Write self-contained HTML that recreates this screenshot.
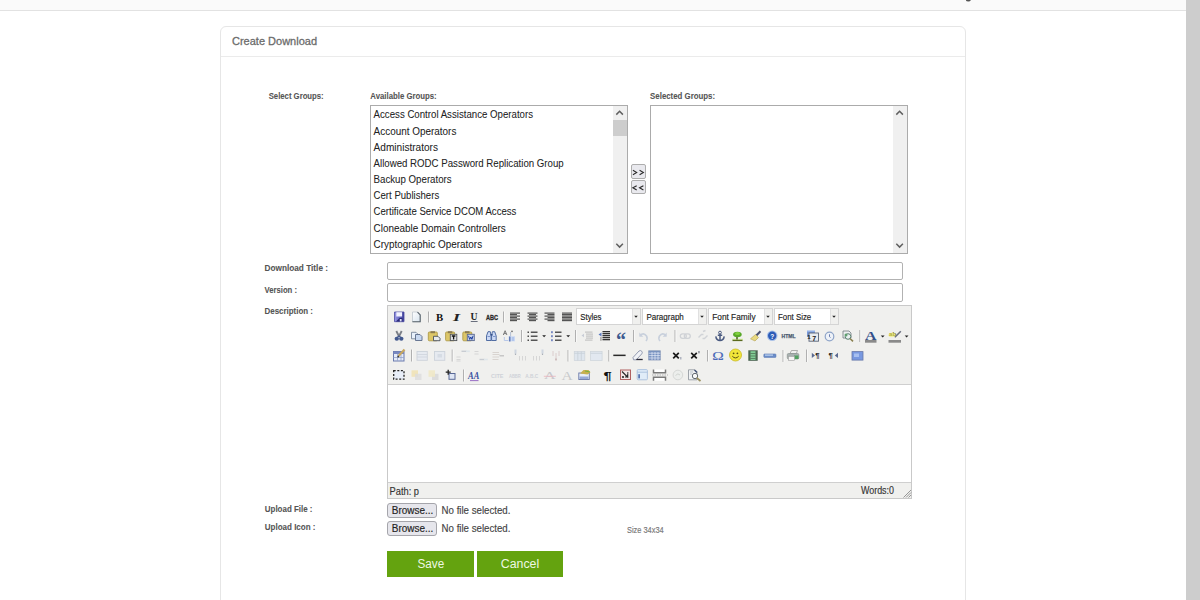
<!DOCTYPE html>
<html><head><meta charset="utf-8"><title>Create Download</title>
<style>
html,body{margin:0;padding:0;background:#fff;width:1200px;height:600px;overflow:hidden;font-family:"Liberation Sans",sans-serif;}
.abs{position:absolute;box-sizing:border-box;}
#topbar{left:0;top:0;width:1186px;height:11px;background:#fafafa;border-bottom:1px solid #e2e2e2;}
#scroll{left:1186px;top:0;width:14px;height:600px;background:#cdcdcd;}
#panel{left:220px;top:26px;width:746px;height:640px;border:1px solid #e6e6e6;border-radius:6px;background:#fff;}
#phead{left:221px;top:56px;width:744px;height:1px;background:#ebebeb;}
.list{border:1px solid #ababab;background:#fff;}
.sbtrack{background:#f0f0f0;}
.thumb{background:#cdcdcd;}
.inp{border:1px solid #b2b2b2;border-radius:2px;background:#fff;}
.mv{border:1px solid #adadad;border-radius:2px;background:#e9e9ee;}
#editor{left:387px;top:305px;width:525px;height:194px;border:1px solid #c9c9c9;background:#f0f0ee;}
#edarea{left:388px;top:384px;width:523px;height:99px;background:#fff;border-top:1px solid #cfcfcf;border-bottom:1px solid #cfcfcf;}
.sel{background:#fff;border:1px solid #d4d4d4;}
.selarr{background:#f0f0ee;border-left:1px solid #e0e0e0;}
.browse{border:1px solid #a5a5ab;border-radius:3px;background:#e6e6ec;}
.green{background:#64a30f;}
svg{position:absolute;left:0;top:0;}
</style></head>
<body>
<div class="abs" id="topbar"></div>
<div class="abs" id="scroll"></div>
<div class="abs" id="panel"></div>
<div class="abs" id="phead"></div>
<!-- available list -->
<div class="abs list" style="left:370px;top:105px;width:258px;height:149px;"></div>
<div class="abs sbtrack" style="left:613px;top:106px;width:14px;height:147px;"></div>
<div class="abs thumb" style="left:613px;top:120px;width:14px;height:16px;"></div>
<!-- selected list -->
<div class="abs list" style="left:650px;top:105px;width:258px;height:149px;"></div>
<div class="abs sbtrack" style="left:893px;top:106px;width:14px;height:147px;"></div>
<!-- move buttons -->
<div class="abs mv" style="left:631px;top:164px;width:15px;height:15px;"></div>
<div class="abs mv" style="left:631px;top:180px;width:15px;height:14px;"></div>
<!-- inputs -->
<div class="abs inp" style="left:387px;top:262px;width:516px;height:18px;"></div>
<div class="abs inp" style="left:387px;top:283px;width:516px;height:19px;"></div>
<!-- editor -->
<div class="abs" id="editor"></div>
<div class="abs" id="edarea"></div>
<div class="abs sel" style="left:576px;top:308px;width:65px;height:17px;"></div>
<div class="abs selarr" style="left:632px;top:309px;width:8px;height:15px;"></div>
<div class="abs sel" style="left:642px;top:308px;width:65px;height:17px;"></div>
<div class="abs selarr" style="left:698px;top:309px;width:8px;height:15px;"></div>
<div class="abs sel" style="left:708px;top:308px;width:65px;height:17px;"></div>
<div class="abs selarr" style="left:764px;top:309px;width:8px;height:15px;"></div>
<div class="abs sel" style="left:774px;top:308px;width:65px;height:17px;"></div>
<div class="abs selarr" style="left:830px;top:309px;width:8px;height:15px;"></div>
<!-- file inputs -->
<div class="abs browse" style="left:387px;top:503px;width:50px;height:15px;"></div>
<div class="abs browse" style="left:387px;top:521px;width:50px;height:15px;"></div>
<!-- buttons -->
<div class="abs green" style="left:387px;top:551px;width:87px;height:26px;"></div>
<div class="abs green" style="left:477px;top:551px;width:86px;height:26px;"></div>
<svg width="1200" height="600" viewBox="0 0 1200 600" font-family="Liberation Sans, sans-serif">
<defs><linearGradient id="gsave" x1="0" y1="0" x2="1" y2="0"><stop offset="0" stop-color="#9a9ae8"/><stop offset="1" stop-color="#3c3c98"/></linearGradient><linearGradient id="gdoc" x1="0" y1="0" x2="1" y2="1"><stop offset="0" stop-color="#ffffff"/><stop offset="1" stop-color="#d8e4ee"/></linearGradient></defs>
<path d="M394.5 312h9.5v9.7h-9.5z" fill="url(#gsave)" stroke="#4a4aa0" stroke-width="0.8"/>
<rect x="396.3" y="312.2" width="5.8" height="4.3" fill="#f2f2ff" />
<path d="M396 321.6l3.5-3.5h3v3.5z" fill="#2a2a78"/>
<rect x="399.8" y="319" width="1.8" height="2.4" fill="#e0e0f8" />
<path d="M412.5 312h5.3l2.5 2.5v7.2h-7.8z" fill="url(#gdoc)" stroke="#b8c0c8" stroke-width="0.7"/>
<path d="M417.5 312.2l2.7 2.7v6.8h-7.8" fill="none" stroke="#5a646c" stroke-width="1.1"/>
<rect x="428" y="311.5" width="1" height="11.0" fill="#b0b0b0" />
<rect x="429" y="311.5" width="1" height="11.0" fill="#ffffff" opacity="0.6"/>
<text x="436" y="320.6" font-family="Liberation Serif" font-weight="bold" font-size="10.6" fill="#111" textLength="7.2" lengthAdjust="spacingAndGlyphs">B</text>
<text x="453" y="320.6" font-family="Liberation Serif" font-weight="bold" font-style="italic" font-size="10.6" fill="#222" textLength="7" lengthAdjust="spacingAndGlyphs">I</text>
<text x="470.6" y="320.3" font-family="Liberation Serif" font-weight="bold" font-size="10.2" fill="#222" textLength="7" lengthAdjust="spacingAndGlyphs">U</text>
<rect x="470.8" y="321" width="6.8" height="0.9" fill="#5a6070" />
<text x="486" y="320" font-family="Liberation Sans" font-weight="bold" font-size="7.8" fill="#2a2a2a" stroke="#2a2a2a" stroke-width="0.35" textLength="12" lengthAdjust="spacingAndGlyphs">ABC</text>
<rect x="503" y="311.5" width="1" height="11.0" fill="#b0b0b0" />
<rect x="504" y="311.5" width="1" height="11.0" fill="#ffffff" opacity="0.6"/>
<rect x="510" y="312.5" width="10" height="1.2" fill="#545454" />
<rect x="510" y="314" width="7" height="1.2" fill="#545454" />
<rect x="510" y="315.5" width="10" height="1.2" fill="#545454" />
<rect x="510" y="317" width="7" height="1.2" fill="#545454" />
<rect x="510" y="318.5" width="10" height="1.2" fill="#545454" />
<rect x="510" y="320" width="7" height="1.2" fill="#545454" />
<rect x="527.5" y="312.5" width="10" height="1.2" fill="#545454" />
<rect x="529.0" y="314" width="7" height="1.2" fill="#545454" />
<rect x="527.5" y="315.5" width="10" height="1.2" fill="#545454" />
<rect x="529.0" y="317" width="7" height="1.2" fill="#545454" />
<rect x="527.5" y="318.5" width="10" height="1.2" fill="#545454" />
<rect x="529.0" y="320" width="7" height="1.2" fill="#545454" />
<rect x="544.5" y="312.5" width="10" height="1.2" fill="#545454" />
<rect x="547.5" y="314" width="7" height="1.2" fill="#545454" />
<rect x="544.5" y="315.5" width="10" height="1.2" fill="#545454" />
<rect x="547.5" y="317" width="7" height="1.2" fill="#545454" />
<rect x="544.5" y="318.5" width="10" height="1.2" fill="#545454" />
<rect x="547.5" y="320" width="7" height="1.2" fill="#545454" />
<rect x="562" y="312.5" width="10" height="1.2" fill="#545454" />
<rect x="562" y="314" width="10" height="1.2" fill="#545454" />
<rect x="562" y="315.5" width="10" height="1.2" fill="#545454" />
<rect x="562" y="317" width="10" height="1.2" fill="#545454" />
<rect x="562" y="318.5" width="10" height="1.2" fill="#545454" />
<rect x="562" y="320" width="10" height="1.2" fill="#545454" />
<path d="M396.3 331l2.8 5.5M401.7 331l-2.8 5.5" stroke="#7c8088" stroke-width="1.9"/>
<ellipse cx="396.8" cy="338.8" rx="2.2" ry="2" fill="#43598e"/>
<ellipse cx="401.3" cy="338.8" rx="2.2" ry="2" fill="#43598e"/><path d="M397 337.5l2 -1.5 2 1.5" stroke="#43598e" stroke-width="1.2" fill="none"/>
<path d="M411.5 332.3h4.5l1.5 1.5v5h-6z" fill="#e8f0fa" stroke="#6b7a90" stroke-width="0.8"/>
<path d="M415.5 334.5h4.5l2 2v4h-6.5z" fill="#c8d8f0" stroke="#5a6a88" stroke-width="0.9"/>
<rect x="428.3" y="332.0" width="9" height="8.8" rx="1" fill="#dcc668" stroke="#a89440" stroke-width="0.8"/>
<rect x="430.5" y="331.2" width="4.5" height="2" fill="#8a7a50" />
<path d="M433.5 336.3h4.5l2 2v2.4h-6.5z" fill="#e6eaef" stroke="#4a5058" stroke-width="0.9"/>
<rect x="445.6" y="332.0" width="9" height="8.8" rx="1" fill="#dcc668" stroke="#a89440" stroke-width="0.8"/>
<rect x="447.8" y="331.2" width="4.5" height="2" fill="#8a7a50" />
<rect x="450.3" y="334.3" width="6.5" height="6.3" fill="#e0e2e4" stroke="#505458" stroke-width="0.9"/>
<path d="M451.8 336h3.6M453.6 336v3.5" stroke="#111" stroke-width="1.3"/>
<rect x="462.8" y="332.0" width="9" height="8.8" rx="1" fill="#dcc668" stroke="#a89440" stroke-width="0.8"/>
<rect x="465.0" y="331.2" width="4.5" height="2" fill="#8a7a50" />
<rect x="467.3" y="334.3" width="7" height="6.3" fill="#c8d4ea" stroke="#5a6890" stroke-width="0.9"/>
<path d="M468.5 335.8l1.2 3.6 1.1-2.4 1.1 2.4 1.2-3.6" stroke="#2040a0" stroke-width="1" fill="none"/>
<path d="M486.5 340.5v-4.5l1.5-4.3h2.3l0.8 4.3v4.5z" fill="#ccdaf6" stroke="#42609a" stroke-width="0.9"/>
<path d="M496.2 340.5v-4.5l-1.5-4.3h-2.3l-0.8 4.3v4.5z" fill="#ccdaf6" stroke="#42609a" stroke-width="0.9"/>
<path d="M490.5 334.8h2" stroke="#34508a" stroke-width="1.6"/><path d="M487.5 336.5h2.5M493 336.5h2.5" stroke="#6a84c0" stroke-width="0.8"/>
<path d="M503.3 335l1.8-4.3 1.8 4.3M504 333.6h2.2" fill="none" stroke="#7a7a7a" stroke-width="1"/>
<circle cx="512" cy="331.3" r="0.9" fill="#707070"/><path d="M510.6 332v4" stroke="#9aaac8" stroke-width="0.7"/>
<path d="M504.3 337v3.5h4" fill="none" stroke="#b8c8e8" stroke-width="1"/>
<rect x="508.5" y="336.3" width="6.5" height="5" fill="#c8d8f4"/><path d="M509.8 336.5v5" stroke="#4a64a8" stroke-width="1.2"/><path d="M513 337v4" stroke="#98b0e0" stroke-width="0.9"/>
<rect x="521" y="330" width="1" height="12" fill="#b0b0b0" />
<rect x="522" y="330" width="1" height="12" fill="#ffffff" opacity="0.6"/>
<rect x="527.5" y="331.5" width="1.5" height="1.5" fill="#4a4a4a" />
<rect x="530.8" y="331.5" width="6.7" height="1.5" fill="#555" />
<rect x="527.5" y="335.5" width="1.5" height="1.5" fill="#4a4a4a" />
<rect x="530.8" y="335.5" width="6.7" height="1.5" fill="#555" />
<rect x="527.5" y="339.5" width="1.5" height="1.5" fill="#4a4a4a" />
<rect x="530.8" y="339.5" width="6.7" height="1.5" fill="#555" />
<path d="M542.2 335.2h3.8l-1.9 2z" fill="#222"/>
<rect x="551.2" y="331.2" width="1.5" height="2" fill="#5a70b8" />
<rect x="555" y="331.5" width="6.5" height="1.5" fill="#555" />
<rect x="551.2" y="335.2" width="1.5" height="2" fill="#5a70b8" />
<rect x="555" y="335.5" width="6.5" height="1.5" fill="#555" />
<rect x="551.2" y="339.2" width="1.5" height="2" fill="#5a70b8" />
<rect x="555" y="339.5" width="6.5" height="1.5" fill="#555" />
<path d="M566.3 335.2h3.8l-1.9 2z" fill="#222"/>
<rect x="575" y="330" width="1" height="12" fill="#b0b0b0" />
<rect x="576" y="330" width="1" height="12" fill="#ffffff" opacity="0.6"/>
<rect x="585" y="331.5" width="7.5" height="1.2" fill="#c4c4c4" />
<rect x="586" y="333.5" width="7" height="1.2" fill="#c4c4c4" />
<rect x="586" y="335.5" width="7" height="1.2" fill="#c4c4c4" />
<rect x="586" y="337.5" width="7" height="1.2" fill="#c4c4c4" />
<rect x="585" y="339.5" width="7.5" height="1.2" fill="#c4c4c4" />
<path d="M581.5 335.5l2.5-1.8v3.6z" fill="#c8cdd6"/>
<rect x="602.5" y="331" width="7.5" height="1.3" fill="#333" />
<rect x="602.5" y="333" width="7.5" height="1.3" fill="#333" />
<rect x="602.5" y="335" width="7.5" height="1.3" fill="#333" />
<rect x="602.5" y="337" width="7.5" height="1.3" fill="#333" />
<rect x="602.5" y="339" width="7.5" height="1.3" fill="#333" />
<path d="M598.5 334.5l3 -2v4z" fill="#5878c0"/>
<rect x="600.5" y="336.8" width="0.9" height="4" fill="#777" />
<text x="616" y="347" font-family="Liberation Serif" font-weight="bold" font-size="20" fill="#3d5a8f" textLength="10" lengthAdjust="spacingAndGlyphs">“</text>
<rect x="633" y="330" width="1" height="12" fill="#b0b0b0" />
<rect x="634" y="330" width="1" height="12" fill="#ffffff" opacity="0.6"/>
<path d="M640 335.5q3.5-3.5 6.5 0.5q1.5 2.5-0.5 5" fill="none" stroke="#c8d0dc" stroke-width="1.6"/><path d="M639.3 332.5v4.2h4z" fill="#c8d0dc"/>
<path d="M666 335.5q-3.5-3.5-6.5 0.5q-1.5 2.5 0.5 5" fill="none" stroke="#c8d0dc" stroke-width="1.6"/><path d="M666.7 332.5v4.2h-4z" fill="#c8d0dc"/>
<rect x="674.5" y="330" width="1" height="12" fill="#b0b0b0" />
<rect x="675.5" y="330" width="1" height="12" fill="#ffffff" opacity="0.6"/>
<rect x="680.3" y="333.8" width="6" height="4.6" rx="2.3" fill="none" stroke="#cfd2d6" stroke-width="1.3"/><rect x="684.3" y="333.8" width="6" height="4.6" rx="2.3" fill="none" stroke="#cfd2d6" stroke-width="1.3"/>
<path d="M698.5 337.5l3-3h2M707.5 335.5l-3 3h-2M703 331.5l2.5 -1" fill="none" stroke="#d0d3d7" stroke-width="1.4"/>
<circle cx="720" cy="332.6" r="1.4" fill="none" stroke="#4a5a80" stroke-width="1"/><path d="M720 334v6.3M717.8 335.3h4.4" stroke="#4a5a80" stroke-width="1.5"/>
<path d="M715.8 336.3q0.5 4 4.2 4.2q3.7-0.2 4.2-4.2" fill="none" stroke="#4a5a80" stroke-width="1.5"/>
<rect x="732.5" y="339.5" width="10" height="1.6" fill="#5a6a20" />
<rect x="732" y="338.8" width="11" height="0.7" fill="#c8f080" />
<path d="M737 335.5v4" stroke="#4a5a20" stroke-width="1.5"/>
<ellipse cx="737.4" cy="334.5" rx="4.3" ry="2.7" fill="#58a828"/><ellipse cx="737.5" cy="333.5" rx="2.5" ry="1.6" fill="#80d040"/>
<path d="M760.5 331.3l-4.2 4.2" stroke="#4a5070" stroke-width="2"/>
<path d="M755.5 334.5l3 3l-3.5 3.5l-4.5-2.2z" fill="#e8d880" stroke="#b0a050" stroke-width="0.6"/>
<circle cx="772.2" cy="335.8" r="5.3" fill="#a8c0e8"/><circle cx="772.2" cy="335.8" r="4.2" fill="#2c5cb8"/>
<text x="770.2" y="338.6" font-family="Liberation Sans" font-weight="bold" font-size="6.5" fill="#fff">?</text>
<text x="781.6" y="337.9" font-family="Liberation Sans" font-weight="bold" font-size="5.4" fill="#4a5a70" stroke="#4a5a70" stroke-width="0.25" textLength="14" lengthAdjust="spacingAndGlyphs">HTML</text>
<rect x="807" y="331" width="8" height="6" fill="#7898d8"/>
<rect x="809" y="333" width="9.5" height="8.2" fill="#e8ecf0" stroke="#5a6478" stroke-width="0.9"/>
<rect x="807" y="330.5" width="8" height="1.5" fill="#90b0e8" />
<text x="807.3" y="338.5" font-family="Liberation Sans" font-weight="bold" font-size="6" fill="#222">1</text><text x="812.3" y="340.8" font-family="Liberation Sans" font-weight="bold" font-size="7" fill="#222">7</text>
<circle cx="829.5" cy="336.5" r="4.3" fill="#eef2f8" stroke="#8ea4c8" stroke-width="1.2"/><path d="M829.5 334.3v2.4l1 0.8" stroke="#5a70a8" stroke-width="0.9" fill="none"/>
<path d="M843 331h6l2 2v5h-8z" fill="#eef0f2" stroke="#70787e" stroke-width="0.8"/>
<circle cx="848" cy="336.5" r="2.8" fill="#e8f0f0" stroke="#5a8070" stroke-width="1"/><circle cx="846" cy="335" r="1.5" fill="#60a070"/>
<path d="M850 338.5l3 2.8" stroke="#8a8050" stroke-width="1.6"/>
<rect x="859.3" y="330" width="1" height="12" fill="#b0b0b0" />
<rect x="860.3" y="330" width="1" height="12" fill="#ffffff" opacity="0.6"/>
<text x="865" y="339.7" font-family="Liberation Serif" font-weight="bold" font-size="12.2" fill="#34508a" textLength="11.5" lengthAdjust="spacingAndGlyphs">A</text>
<rect x="865" y="340" width="11.5" height="2.7" fill="#8a8a8a" />
<path d="M880.8 335.6h3.8l-1.9 2z" fill="#222"/>
<text x="889" y="335.8" font-family="Liberation Sans" font-weight="bold" font-size="6.2" fill="#7a7010">ab</text>
<path d="M900.8 331.3l-6 6" stroke="#6a7080" stroke-width="1.6"/>
<ellipse cx="892" cy="335" rx="3.5" ry="2.2" fill="#f0f060" opacity="0.5"/>
<rect x="888.5" y="340" width="12.5" height="2.7" fill="#8a8a8a" />
<path d="M904.7 335.6h3.8l-1.9 2z" fill="#222"/>
<rect x="393.5" y="351.5" width="10.5" height="9.5" fill="#e6ecf8" stroke="#6a7aae" stroke-width="1"/>
<rect x="393.5" y="351.5" width="10.5" height="2.5" fill="#7888c0" />
<path d="M393.5 357.5h10.5M397.5 354v7M401 354v7" stroke="#96a4cc" stroke-width="0.8"/>
<path d="M404.5 349.5l-6 6.5" stroke="#c8a860" stroke-width="2.2"/><path d="M398.7 355.8l-1 1.5" stroke="#333" stroke-width="1.4"/>
<rect x="411" y="349.5" width="1" height="12.0" fill="#b0b0b0" />
<rect x="412" y="349.5" width="1" height="12.0" fill="#ffffff" opacity="0.6"/>
<rect x="417" y="351.5" width="10.3" height="8.8" fill="#e6eaf0" stroke="#ccd2da" stroke-width="0.9"/><path d="M417 354.5h10.3M417 357h10.3" stroke="#d0d6de" stroke-width="0.9"/>
<rect x="434.5" y="351.5" width="10.3" height="8.8" fill="#e6eaf0" stroke="#ccd2da" stroke-width="0.9"/><rect x="437.5" y="354" width="4.5" height="3.5" fill="#d6dce4"/>
<rect x="451.7" y="349.5" width="1" height="12.0" fill="#b0b0b0" />
<rect x="452.7" y="349.5" width="1" height="12.0" fill="#ffffff" opacity="0.6"/>
<path d="M456.5 357h4M456.5 359.5h4M456.5 361h4" stroke="#d2d2d2" stroke-width="0.9"/><path d="M461.5 351.3h5" stroke="#c8ccd2" stroke-width="1.4"/><path d="M466 351.3h3.8" stroke="#dfe6ea" stroke-width="1.6"/>
<path d="M474.5 351.5h4M474.5 354h4" stroke="#d2d2d2" stroke-width="0.9"/><path d="M479.5 359.5h5" stroke="#c8ccd2" stroke-width="1.4"/><path d="M484 359.5h3.8" stroke="#dfe6ea" stroke-width="1.6"/>
<path d="M492.5 352.5h6.5M492.5 354.5h7M492.5 357h6.5M492.5 359.5h6" stroke="#d6d0cc" stroke-width="0.9"/><path d="M499.5 355.8h4.5" stroke="#c0c0c0" stroke-width="1.3"/>
<path d="M515.5 349.5v4" stroke="#cfd6e0" stroke-width="2"/><path d="M515.5 353.5v1.5" stroke="#aab0b8" stroke-width="1.2"/><path d="M519.5 356v4.5M522.5 356v4.5M525.5 356v4.5" stroke="#d2d2d2" stroke-width="0.9"/>
<path d="M533.5 356v4.5M536.5 356v4.5M539.5 356v4.5" stroke="#d2d2d2" stroke-width="0.9"/><path d="M542.5 349.5v4" stroke="#cfd6e0" stroke-width="2"/><path d="M542.5 353.5v1.5" stroke="#aab0b8" stroke-width="1.2"/>
<path d="M553 351v5M559 351v5M556 353v7" stroke="#d8c8c8" stroke-width="0.9"/><path d="M556 358.5v2" stroke="#c0a8a8" stroke-width="1.2"/>
<rect x="567.5" y="350" width="1" height="11.5" fill="#b0b0b0" />
<rect x="568.5" y="350" width="1" height="11.5" fill="#ffffff" opacity="0.6"/>
<rect x="574.3" y="351.5" width="10.5" height="9" fill="#dfe6ee" stroke="#d0d6dc" stroke-width="0.8"/><path d="M574.3 353.3h10.5M577.8 351.5v9M581.3 351.5v9" stroke="#c8d0d8" stroke-width="0.8"/>
<rect x="590.6" y="351.5" width="11.5" height="9" fill="#e2e8f0" stroke="#d0d6dc" stroke-width="0.8"/><path d="M590.6 353.3h11.5" stroke="#c8d0d8" stroke-width="0.8"/>
<rect x="608.3" y="350" width="1" height="11.5" fill="#b0b0b0" />
<rect x="609.3" y="350" width="1" height="11.5" fill="#ffffff" opacity="0.6"/>
<rect x="613.3" y="354.6" width="12.3" height="1.5" fill="#2a2a2a" />
<path d="M633 357.5l6-6.5q1.5-1 2.8 0.3q1 1.2 0 2.5l-5.5 6h-2.8z" fill="#f0f2f6" stroke="#8890a8" stroke-width="0.9"/>
<path d="M636.3 359.5h6.4" stroke="#2a2a38" stroke-width="1.3"/>
<rect x="648.7" y="350.8" width="11.6" height="9.2" fill="#7590c0" stroke="#8a9ab8" stroke-width="0.8"/>
<path d="M648.7 353.2h11.6M648.7 355.6h11.6M648.7 358h11.6M652 352v8M655 352v8M658 352v8" stroke="#e8eef8" stroke-width="0.7"/>
<path d="M673.2 352.8l5.6 5.6M678.8 352.8l-5.6 5.6" stroke="#1a1a1a" stroke-width="1.7"/>
<rect x="680" y="357" width="1.5" height="2.5" fill="#b0b4c0" />
<path d="M691.2 352.8l5.6 5.6M696.8 352.8l-5.6 5.6" stroke="#1a1a1a" stroke-width="1.7"/>
<rect x="698.2" y="351" width="1.5" height="2.3" fill="#8a8e98" />
<rect x="707" y="350" width="1" height="11.5" fill="#b0b0b0" />
<rect x="708" y="350" width="1" height="11.5" fill="#ffffff" opacity="0.6"/>
<text x="712.2" y="359.6" font-family="Liberation Serif" font-size="12.8" fill="#4a68b8" stroke="#4a68b8" stroke-width="0.1" textLength="11.5" lengthAdjust="spacingAndGlyphs">Ω</text>
<circle cx="735.5" cy="355" r="6" fill="#f2e63a" stroke="#c8b820" stroke-width="0.8"/>
<circle cx="733.6" cy="353.3" r="0.9" fill="#5a5010"/><circle cx="737.4" cy="353.3" r="0.9" fill="#5a5010"/><path d="M732.3 356.2q3.2 3.5 6.4 0" fill="none" stroke="#5a5010" stroke-width="1"/>
<rect x="748.3" y="350.3" width="9.4" height="10.5" fill="#4a6450"/><rect x="750.5" y="351.2" width="5" height="8.8" fill="#80cc94"/>
<path d="M750.5 353.5h5M750.5 356h5M750.5 358.5h5" stroke="#3e5a42" stroke-width="0.6"/>
<rect x="763.8" y="353.9" width="12.2" height="3.6" rx="0.8" fill="#6a8cc8" stroke="#5a78b0" stroke-width="0.5"/><rect x="765" y="354.5" width="8" height="1.2" fill="#c0d4f0"/>
<rect x="782.5" y="350" width="1" height="12" fill="#b0b0b0" />
<rect x="783.5" y="350" width="1" height="12" fill="#ffffff" opacity="0.6"/>
<path d="M790 353.5l1.5-3h6l-1.2 3z" fill="#f0f0f0" stroke="#909090" stroke-width="0.7"/>
<rect x="787.3" y="353.5" width="11.5" height="5.5" rx="1.2" fill="#a8b0b0" stroke="#8a9490" stroke-width="0.7"/><rect x="794" y="355.5" width="4.5" height="3.5" fill="#50a060"/>
<rect x="788.5" y="356.5" width="6" height="4" fill="#f4f4f4" stroke="#a0a0a0" stroke-width="0.6"/>
<rect x="806" y="349.5" width="1" height="12.5" fill="#b0b0b0" />
<rect x="807" y="349.5" width="1" height="12.5" fill="#ffffff" opacity="0.6"/>
<path d="M811.8 352.8l3.2 2.6-3.2 2.6z" fill="#5a6a90"/><text x="815.3" y="358.3" font-family="Liberation Sans" font-weight="bold" font-size="7.8" fill="#2a2a2a">¶</text>
<text x="828.5" y="358.3" font-family="Liberation Sans" font-weight="bold" font-size="7.8" fill="#2a2a2a">¶</text><path d="M838 352.8l-3.2 2.6 3.2 2.6z" fill="#5a6a90"/>
<rect x="852" y="351.6" width="11" height="8.5" fill="#7898e0" stroke="#6878a8" stroke-width="0.8"/><rect x="854" y="353.5" width="5" height="3.5" fill="#a8c0f0"/>
<rect x="393.7" y="370.7" width="10.3" height="8.5" fill="#e8eef8" stroke="#222" stroke-width="1.3" stroke-dasharray="2 1.6"/>
<rect x="411.5" y="370.3" width="6.5" height="6.5" fill="#f0e4bc"/><rect x="415" y="373.8" width="6.5" height="6.2" fill="#dcdcdc" opacity="0.8"/>
<rect x="432" y="373.8" width="6.5" height="6.2" fill="#dcdcdc"/><rect x="428.5" y="370.3" width="6.5" height="6.5" fill="#f0e8c6" opacity="0.9"/>
<rect x="449" y="373.5" width="6" height="5.8" fill="#dfe6f4" stroke="#5a6a98" stroke-width="1"/><path d="M445.7 372.2h5M448.2 369.7v5" stroke="#222" stroke-width="1.3"/>
<rect x="463" y="369.5" width="1" height="12.0" fill="#b0b0b0" />
<rect x="464" y="369.5" width="1" height="12.0" fill="#ffffff" opacity="0.6"/>
<text x="468" y="379.3" font-family="Liberation Serif" font-style="italic" font-weight="bold" font-size="10.5" fill="#3a50a0" textLength="11.3" lengthAdjust="spacingAndGlyphs">AA</text>
<rect x="470" y="380.2" width="8.5" height="0.9" fill="#9060c0" />
<text x="491" y="377.8" font-family="Liberation Sans" font-weight="bold" font-size="5" fill="#cfd2d8" textLength="12.5" lengthAdjust="spacingAndGlyphs">CITE</text>
<text x="509" y="377.8" font-family="Liberation Sans" font-weight="bold" font-size="5" fill="#cfd2d8" textLength="11.7" lengthAdjust="spacingAndGlyphs">ABBR</text>
<text x="525.3" y="377.8" font-family="Liberation Sans" font-weight="bold" font-size="5" fill="#cfd2d8" textLength="13" lengthAdjust="spacingAndGlyphs">A.B.C</text>
<text x="544" y="379.3" font-family="Liberation Serif" font-size="11" fill="#c8c8cc" textLength="11.5" lengthAdjust="spacingAndGlyphs">A</text>
<rect x="543.8" y="375.8" width="12" height="0.9" fill="#e8b8c0" />
<text x="561.5" y="379.6" font-family="Liberation Serif" font-size="11.5" fill="#c8cacc" textLength="11.2" lengthAdjust="spacingAndGlyphs">A</text>
<rect x="578.8" y="373" width="10.5" height="6.5" fill="#e8eef8" stroke="#6878a8" stroke-width="0.9"/><rect x="579.5" y="376.5" width="9" height="2.5" fill="#98aad8"/>
<path d="M580 373.5l3.5-3.5h5l2 2.3-3 2.2z" fill="#c8b050"/><path d="M585 371l5 1" stroke="#70b040" stroke-width="0.9"/>
<text x="603.5" y="379.5" font-family="Liberation Sans" font-weight="bold" font-size="11.5" fill="#111" textLength="8.2" lengthAdjust="spacingAndGlyphs">¶</text>
<rect x="620.5" y="370" width="10" height="9.5" fill="#f4e6e6" stroke="#b06060" stroke-width="1"/>
<path d="M622 371.5l5.5 5.5M627.5 377v-2.5M627.5 377h-2.5" stroke="#2a2a2a" stroke-width="1.1" fill="none"/><path d="M627.8 372v6" stroke="#2a2a2a" stroke-width="0.9"/><circle cx="623" cy="377" r="1.1" fill="#2a2a2a"/>
<rect x="637.2" y="369.6" width="10.2" height="10.2" rx="1" fill="#e0ecf8" stroke="#a8c0dc" stroke-width="0.9"/><path d="M637.2 372.2h10.2" stroke="#a8c0dc" stroke-width="0.9"/><rect x="638.3" y="374.2" width="1.6" height="4.2" fill="#4a68a8"/>
<path d="M653.5 369.5v3.3h12v-3.3M653.5 380.8v-3.5h12v3.5" fill="#fff" stroke="#7a7a7a" stroke-width="1.5"/><path d="M652 375h16" stroke="#a8a8a8" stroke-width="0.9" stroke-dasharray="1.5 1"/>
<circle cx="677.9" cy="375" r="4.8" fill="#eceeec" stroke="#d6d8d6" stroke-width="1"/><path d="M675.5 375.5q2.5-3 4.5-0.5" stroke="#ccd0cc" stroke-width="0.9" fill="none"/>
<path d="M688.5 369.8h6.5l2 2v8h-8.5z" fill="#f0f2f4" stroke="#8a9098" stroke-width="0.8"/><path d="M690 372h3M690 374h2" stroke="#a8b0b8" stroke-width="0.7"/>
<circle cx="695" cy="376" r="2.7" fill="#f8f8f8" stroke="#606870" stroke-width="1"/><path d="M696.8 378l3.7 3" stroke="#9a9060" stroke-width="1.7"/>
<path d="M694.5 370l2.5 2.5" stroke="#3a4a70" stroke-width="1.2"/>
<path d="M616.3000000000001 114.6l3.3-3.3 3.3 3.3" fill="none" stroke="#606060" stroke-width="1.5"/>
<path d="M616.3000000000001 243.79999999999998l3.3 3.3 3.3-3.3" fill="none" stroke="#606060" stroke-width="1.5"/>
<path d="M896.3000000000001 114.6l3.3-3.3 3.3 3.3" fill="none" stroke="#606060" stroke-width="1.5"/>
<path d="M896.3000000000001 243.79999999999998l3.3 3.3 3.3-3.3" fill="none" stroke="#606060" stroke-width="1.5"/>
<path d="M632.9 170.3l3.8 2.2-3.8 2.2M639.6 170.3l3.8 2.2-3.8 2.2" fill="none" stroke="#2a2a2a" stroke-width="1.05"/>
<path d="M636.7 185.7l-3.8 2.1 3.8 2.1M643.4 185.7l-3.8 2.1 3.8 2.1" fill="none" stroke="#2a2a2a" stroke-width="1.15"/>
<path d="M634.2 315.8h3.6l-1.8 2z" fill="#222"/>
<path d="M700.2 315.8h3.6l-1.8 2z" fill="#222"/>
<path d="M766.2 315.8h3.6l-1.8 2z" fill="#222"/>
<path d="M832.2 315.8h3.6l-1.8 2z" fill="#222"/>
<path d="M903.5 497.5l7.5-7.5M906 497.5l5-5M908.5 497.5l2.5-2.5" stroke="#8a8a8a" stroke-width="0.9"/>
<ellipse cx="968.3" cy="0.2" rx="2.2" ry="1.3" fill="#555"/>
<text x="232.00" y="44.80" font-size="11.63" font-weight="normal" fill="#6b6b6b" stroke="#6b6b6b" stroke-width="0.3" textLength="85.00" lengthAdjust="spacingAndGlyphs">Create Download</text>
<text x="268.70" y="99.00" font-size="8.72" font-weight="bold" fill="#555" stroke="#555" stroke-width="0.08" textLength="55.00" lengthAdjust="spacingAndGlyphs">Select Groups:</text>
<text x="370.30" y="99.00" font-size="8.72" font-weight="bold" fill="#555" stroke="#555" stroke-width="0.08" textLength="66.40" lengthAdjust="spacingAndGlyphs">Available Groups:</text>
<text x="650.10" y="99.00" font-size="8.72" font-weight="bold" fill="#555" stroke="#555" stroke-width="0.08" textLength="65.00" lengthAdjust="spacingAndGlyphs">Selected Groups:</text>
<text x="373.60" y="118.40" font-size="10.61" font-weight="normal" fill="#222" stroke="#222" stroke-width="0.05" textLength="159.40" lengthAdjust="spacingAndGlyphs">Access Control Assistance Operators</text>
<text x="373.60" y="134.56" font-size="10.61" font-weight="normal" fill="#222" stroke="#222" stroke-width="0.05" textLength="82.80" lengthAdjust="spacingAndGlyphs">Account Operators</text>
<text x="373.60" y="150.72" font-size="10.61" font-weight="normal" fill="#222" stroke="#222" stroke-width="0.05" textLength="64.40" lengthAdjust="spacingAndGlyphs">Administrators</text>
<text x="373.60" y="166.88" font-size="10.61" font-weight="normal" fill="#222" stroke="#222" stroke-width="0.05" textLength="190.10" lengthAdjust="spacingAndGlyphs">Allowed RODC Password Replication Group</text>
<text x="373.60" y="183.04" font-size="10.61" font-weight="normal" fill="#222" stroke="#222" stroke-width="0.05" textLength="78.05" lengthAdjust="spacingAndGlyphs">Backup Operators</text>
<text x="373.60" y="199.20" font-size="10.61" font-weight="normal" fill="#222" stroke="#222" stroke-width="0.05" textLength="65.60" lengthAdjust="spacingAndGlyphs">Cert Publishers</text>
<text x="373.60" y="215.36" font-size="10.61" font-weight="normal" fill="#222" stroke="#222" stroke-width="0.05" textLength="142.80" lengthAdjust="spacingAndGlyphs">Certificate Service DCOM Access</text>
<text x="373.60" y="231.52" font-size="10.61" font-weight="normal" fill="#222" stroke="#222" stroke-width="0.05" textLength="132.10" lengthAdjust="spacingAndGlyphs">Cloneable Domain Controllers</text>
<text x="373.60" y="247.68" font-size="10.61" font-weight="normal" fill="#222" stroke="#222" stroke-width="0.05" textLength="108.50" lengthAdjust="spacingAndGlyphs">Cryptographic Operators</text>
<text x="264.50" y="270.80" font-size="8.72" font-weight="bold" fill="#555" stroke="#555" stroke-width="0.08" textLength="63.50" lengthAdjust="spacingAndGlyphs">Download Title :</text>
<text x="264.50" y="292.50" font-size="8.72" font-weight="bold" fill="#555" stroke="#555" stroke-width="0.08" textLength="32.50" lengthAdjust="spacingAndGlyphs">Version :</text>
<text x="264.50" y="314.00" font-size="8.72" font-weight="bold" fill="#555" stroke="#555" stroke-width="0.08" textLength="48.50" lengthAdjust="spacingAndGlyphs">Description :</text>
<text x="264.80" y="511.70" font-size="8.72" font-weight="bold" fill="#555" stroke="#555" stroke-width="0.08" textLength="47.70" lengthAdjust="spacingAndGlyphs">Upload File :</text>
<text x="264.80" y="529.70" font-size="8.72" font-weight="bold" fill="#555" stroke="#555" stroke-width="0.08" textLength="50.70" lengthAdjust="spacingAndGlyphs">Upload Icon :</text>
<text x="580.30" y="320.00" font-size="9.01" font-weight="normal" fill="#222" stroke="#222" stroke-width="0.15" textLength="21.20" lengthAdjust="spacingAndGlyphs">Styles</text>
<text x="646.40" y="320.00" font-size="9.01" font-weight="normal" fill="#222" stroke="#222" stroke-width="0.15" textLength="37.40" lengthAdjust="spacingAndGlyphs">Paragraph</text>
<text x="712.20" y="319.80" font-size="9.01" font-weight="normal" fill="#222" stroke="#222" stroke-width="0.15" textLength="43.40" lengthAdjust="spacingAndGlyphs">Font Family</text>
<text x="778.00" y="319.80" font-size="9.01" font-weight="normal" fill="#222" stroke="#222" stroke-width="0.15" textLength="33.20" lengthAdjust="spacingAndGlyphs">Font Size</text>
<text x="389.50" y="495.00" font-size="10.17" font-weight="normal" fill="#333" stroke="#333" stroke-width="0.15" textLength="29.50" lengthAdjust="spacingAndGlyphs">Path: p</text>
<text x="861.00" y="494.00" font-size="10.17" font-weight="normal" fill="#333" stroke="#333" stroke-width="0.15" textLength="33.00" lengthAdjust="spacingAndGlyphs">Words:0</text>
<text x="391.80" y="513.80" font-size="10.17" font-weight="normal" fill="#222" stroke="#222" stroke-width="0.15" textLength="41.60" lengthAdjust="spacingAndGlyphs">Browse...</text>
<text x="391.80" y="532.20" font-size="10.17" font-weight="normal" fill="#222" stroke="#222" stroke-width="0.15" textLength="41.60" lengthAdjust="spacingAndGlyphs">Browse...</text>
<text x="441.60" y="513.80" font-size="10.17" font-weight="normal" fill="#444" stroke="#444" stroke-width="0.15" textLength="68.80" lengthAdjust="spacingAndGlyphs">No file selected.</text>
<text x="441.60" y="532.20" font-size="10.17" font-weight="normal" fill="#444" stroke="#444" stroke-width="0.15" textLength="68.80" lengthAdjust="spacingAndGlyphs">No file selected.</text>
<text x="627.00" y="532.50" font-size="8.72" font-weight="normal" fill="#777" stroke="#777" stroke-width="0.15" textLength="36.70" lengthAdjust="spacingAndGlyphs">Size 34x34</text>
<text x="417.50" y="568.30" font-size="13.08" font-weight="normal" fill="#eef8e4" stroke="#eef8e4" stroke-width="0" textLength="26.70" lengthAdjust="spacingAndGlyphs">Save</text>
<text x="500.80" y="568.30" font-size="13.08" font-weight="normal" fill="#eef8e4" stroke="#eef8e4" stroke-width="0" textLength="38.40" lengthAdjust="spacingAndGlyphs">Cancel</text>
</svg>
</body></html>
